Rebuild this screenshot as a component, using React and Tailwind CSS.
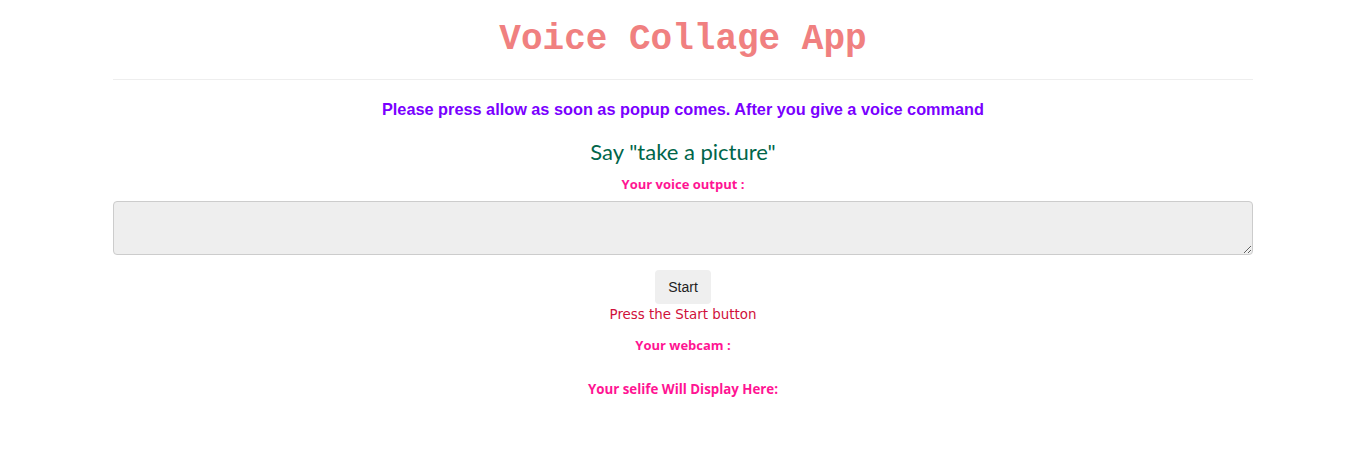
export default function App() {
  return (
    <div className="bg-white w-[1356px] h-[457px] overflow-hidden">
      <div className="w-[1140px] ml-[113px] flex flex-col items-center">
        <h1 className="mt-[19px] h-[42px] leading-[42px] text-[36px] font-bold text-[#f08080] font-['Liberation_Mono','Courier_New',monospace]">
          Voice Collage App
        </h1>
        <div className="mt-[18px] w-full h-px bg-[#eeeeee]" />
        <p className="mt-[19px] h-[20px] leading-[20px] text-[16.3px] font-bold text-[#7a00ff] font-['Liberation_Sans',Arial,sans-serif]">
          Please press allow as soon as popup comes. After you give a voice command
        </p>
        <p className="mt-[19px] h-[28px] leading-[28px] text-[22px] text-[#00664a] font-['Lato','Open_Sans',sans-serif]">
          Say "take a picture"
        </p>
        <p className="mt-[9px] h-[18px] leading-[18px] text-[13px] font-bold text-[#ff1493] font-['Open_Sans',sans-serif]">
          Your voice output :
        </p>
        <textarea className="mt-[8px] w-full h-[54px] bg-[#eeeeee] border border-[#cccccc] rounded-[4px] block" />
        <button className="mt-[15px] w-[56px] h-[34px] bg-[#efefef] rounded-[4px] text-[14px] text-[#222] font-['Liberation_Sans',Arial,sans-serif]">
          Start
        </button>
        <p className="mt-[1px] h-[20px] leading-[20px] text-[13.4px] text-[#d0103a] font-['DejaVu_Sans',sans-serif]">
          Press the Start button
        </p>
        <p className="mt-[11px] h-[18px] leading-[18px] text-[13px] font-bold text-[#ff1493] font-['Open_Sans',sans-serif]">
          Your webcam :
        </p>
        <p className="mt-[26px] h-[18px] leading-[18px] text-[13.3px] font-bold text-[#ff1493] font-['Open_Sans',sans-serif]">
          Your selife Will Display Here:
        </p>
      </div>
    </div>
  );
}
